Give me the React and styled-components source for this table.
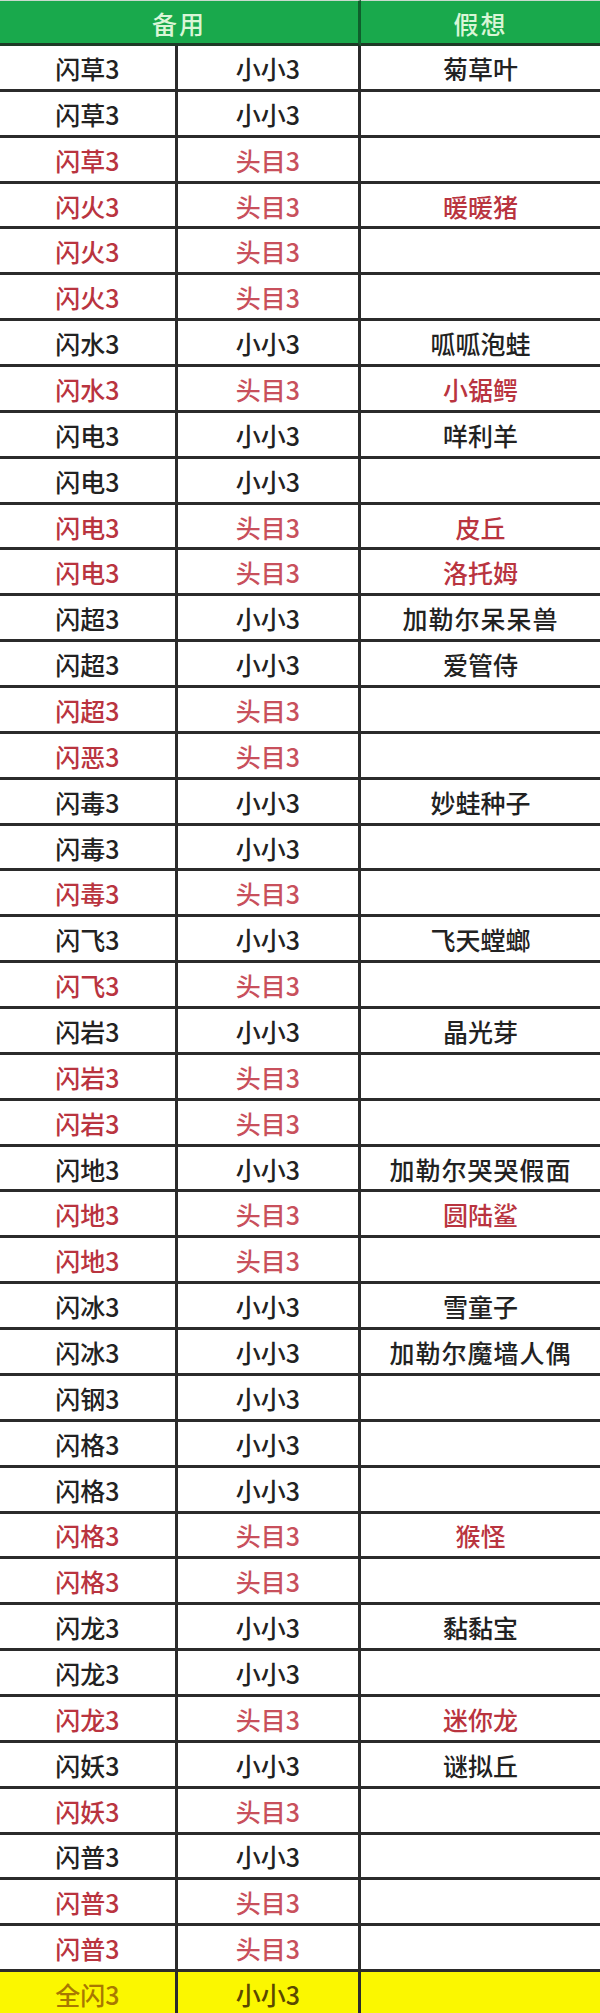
import React from "react";
import styled, { createGlobalStyle } from "styled-components";

const GlobalStyle = createGlobalStyle`
  html, body { margin: 0; padding: 0; background: #ffffff; }
  * { box-sizing: border-box; }
`;

const ROW_H = 45.87;
const LINE = "#2b2b2b";

const Table = styled.div`
  width: 600px;
  display: grid;
  grid-template-columns: 178px 183px 239px;
  grid-template-rows: 46px;
  grid-auto-rows: ${ROW_H}px;
  font-family: "Noto Sans CJK SC", "Noto Sans", sans-serif;
  font-size: 25px;
  overflow: hidden;
`;

const HeaderCell = styled.div`
  grid-column: ${(p) => (p.$span ? `span ${p.$span}` : "auto")};
  background: #19a94c;
  color: #d9f6d6;
  display: flex;
  align-items: center;
  justify-content: center;
  border-top: 1px solid #c9d9cd;
  border-bottom: 3px solid #1e3a26;
  border-right: ${(p) => (p.$last ? "none" : "3px solid #0f5f2c")};
  font-weight: 500;
  letter-spacing: 2px;
  padding-top: 2px;
`;

const Cell = styled.div`
  display: flex;
  align-items: center;
  justify-content: center;
  background: ${(p) => (p.$yellow ? "#fbf700" : "#ffffff")};
  color: ${(p) => p.$color};
  border-bottom: 3px solid ${LINE};
  border-right: ${(p) => (p.$last ? "none" : `3px solid ${LINE}`)};
  font-weight: 500;
  white-space: nowrap;
  padding-top: 1px;
  letter-spacing: ${(p) => (p.$wide ? "1px" : "0")};
`;

const DARK = "#222222";
const RED = "#b9343f";
const PINK = "#c8505c";

const rows = [
  ["闪草3", "小小3", "菊草叶", 0],
  ["闪草3", "小小3", "", 0],
  ["闪草3", "头目3", "", 1],
  ["闪火3", "头目3", "暖暖猪", 1],
  ["闪火3", "头目3", "", 1],
  ["闪火3", "头目3", "", 1],
  ["闪水3", "小小3", "呱呱泡蛙", 0],
  ["闪水3", "头目3", "小锯鳄", 1],
  ["闪电3", "小小3", "咩利羊", 0],
  ["闪电3", "小小3", "", 0],
  ["闪电3", "头目3", "皮丘", 1],
  ["闪电3", "头目3", "洛托姆", 1],
  ["闪超3", "小小3", "加勒尔呆呆兽", 0],
  ["闪超3", "小小3", "爱管侍", 0],
  ["闪超3", "头目3", "", 1],
  ["闪恶3", "头目3", "", 1],
  ["闪毒3", "小小3", "妙蛙种子", 0],
  ["闪毒3", "小小3", "", 0],
  ["闪毒3", "头目3", "", 1],
  ["闪飞3", "小小3", "飞天螳螂", 0],
  ["闪飞3", "头目3", "", 1],
  ["闪岩3", "小小3", "晶光芽", 0],
  ["闪岩3", "头目3", "", 1],
  ["闪岩3", "头目3", "", 1],
  ["闪地3", "小小3", "加勒尔哭哭假面", 0],
  ["闪地3", "头目3", "圆陆鲨", 1],
  ["闪地3", "头目3", "", 1],
  ["闪冰3", "小小3", "雪童子", 0],
  ["闪冰3", "小小3", "加勒尔魔墙人偶", 0],
  ["闪钢3", "小小3", "", 0],
  ["闪格3", "小小3", "", 0],
  ["闪格3", "小小3", "", 0],
  ["闪格3", "头目3", "猴怪", 1],
  ["闪格3", "头目3", "", 1],
  ["闪龙3", "小小3", "黏黏宝", 0],
  ["闪龙3", "小小3", "", 0],
  ["闪龙3", "头目3", "迷你龙", 1],
  ["闪妖3", "小小3", "谜拟丘", 0],
  ["闪妖3", "头目3", "", 1],
  ["闪普3", "小小3", "", 0],
  ["闪普3", "头目3", "", 1],
  ["闪普3", "头目3", "", 1],
];

export default function App() {
  return (
    <>
      <GlobalStyle />
      <Table>
        <HeaderCell $span={2}>备用</HeaderCell>
        <HeaderCell $last>假想</HeaderCell>
        {rows.map(([a, b, c, red], i) => (
          <React.Fragment key={i}>
            <Cell $color={red ? RED : DARK}>{a}</Cell>
            <Cell $color={red ? PINK : DARK}>{b}</Cell>
            <Cell $color={red ? RED : DARK} $last $wide={c.length > 4}>
              {c}
            </Cell>
          </React.Fragment>
        ))}
        <Cell $yellow $color="#a87800">全闪3</Cell>
        <Cell $yellow $color="#5a4800">小小3</Cell>
        <Cell $yellow $color={DARK} $last></Cell>
      </Table>
    </>
  );
}
